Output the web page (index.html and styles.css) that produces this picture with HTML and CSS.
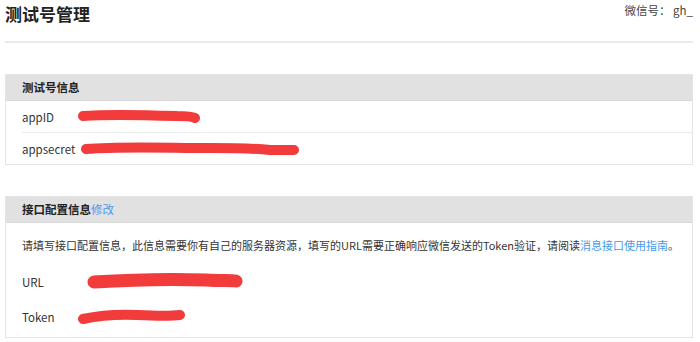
FILE: index.html
```html
<!DOCTYPE html>
<html lang="zh-CN">
<head>
    <meta charset="UTF-8">
    <meta name="viewport" content="width=device-width, initial-scale=1.0">
    <title>测试号管理</title>
    <link rel="stylesheet" href="styles.css">
</head>
<body>
    <div class="page">
        <div class="page-head">
            <h2 class="page-title">测试号管理</h2>
            <div class="account">微信号： gh_</div>
        </div>

        <!-- 测试号信息 -->
        <div class="panel">
            <div class="panel-head">测试号信息</div>
            <div class="panel-body">
                <div class="info-row">
                    <span class="label">appID</span>
                    <svg class="mask mask-appid" width="124" height="16" viewBox="0 0 124 16">
                        <path d="M6 7 C30 5, 70 6, 100 7 C110 7, 116 8, 118 9" />
                    </svg>
                </div>
                <div class="info-row">
                    <span class="label">appsecret</span>
                    <svg class="mask mask-secret" width="220" height="16" viewBox="0 0 220 16">
                        <path d="M6 8 C40 5, 90 7, 130 7 C160 7, 180 8, 190 9 L214 9" />
                    </svg>
                </div>
            </div>
        </div>

        <!-- 接口配置信息 -->
        <div class="panel">
            <div class="panel-head">接口配置信息<a href="#" class="link">修改</a></div>
            <div class="panel-body cfg-body">
                <p class="desc">请填写接口配置信息，此信息需要你有自己的服务器资源，填写的URL需要正确响应微信发送的Token验证，请阅读<a href="#" class="link">消息接口使用指南</a>。</p>
                <div class="cfg-row">
                    <span class="label">URL</span>
                    <svg class="mask mask-url thick" width="158" height="20" viewBox="0 0 158 20">
                        <path d="M8 10 C40 8, 90 7, 120 8 C135 9, 145 8, 150 9" />
                    </svg>
                </div>
                <div class="cfg-row">
                    <span class="label">Token</span>
                    <svg class="mask mask-token" width="110" height="16" viewBox="0 0 110 16">
                        <path d="M6 10 C20 7, 40 5, 60 6 C80 7, 95 7, 103 6" />
                    </svg>
                </div>
            </div>
        </div>
    </div>
</body>
</html>
```

FILE: styles.css
```css
body {
    margin: 0;
    padding: 0;
    background: #fff;
    color: #333;
    font-family: "Noto Sans CJK SC", "Noto Sans", sans-serif;
    font-size: 11.5px;
}

.page {
    padding: 0 7px 0 5px;
}

.page-head {
    display: flex;
    justify-content: space-between;
    align-items: flex-start;
    height: 41px;
    border-bottom: 2px solid #ebebeb;
}

.page-title {
    margin: 0;
    padding-top: 3px;
    font-size: 17px;
    line-height: 22px;
    font-weight: bold;
    color: #222;
}

.account {
    padding-top: 3px;
    font-size: 11.5px;
    line-height: 14px;
    color: #444;
}

.panel {
    margin-top: 31px;
    border: 1px solid #e4e4e4;
}

.panel-head {
    height: 25px;
    line-height: 25px;
    padding-left: 16px;
    background-color: #e1e1e1;
    border-bottom: 1px solid #d8d8d8;
    font-weight: bold;
    color: #222;
}

.link {
    color: #459ae9;
    text-decoration: none;
    font-weight: normal;
}

.info-row {
    display: flex;
    align-items: center;
    height: 31px;
    margin-left: 16px;
    border-bottom: 1px solid #ececec;
}

.info-row:last-child {
    border-bottom: none;
}

.label {
    color: #333;
}

.mask path {
    fill: none;
    stroke: #f23b3b;
    stroke-width: 10;
    stroke-linecap: round;
}

.mask.thick path {
    stroke-width: 13;
}

.mask-appid {
    margin-left: 23px;
}

.mask-secret {
    margin-left: 5px;
}

.cfg-body {
    padding-bottom: 3px;
}

.desc {
    margin: 0;
    padding: 14px 0 0 16px;
    font-size: 11px;
    line-height: 16px;
    white-space: nowrap;
    color: #333;
}

.cfg-row {
    display: flex;
    align-items: center;
    height: 35px;
    padding-left: 16px;
}

.cfg-row:first-of-type {
    margin-top: 11px;
}

.mask-url {
    margin-left: 42px;
}

.mask-token {
    margin-left: 22px;
}
```
